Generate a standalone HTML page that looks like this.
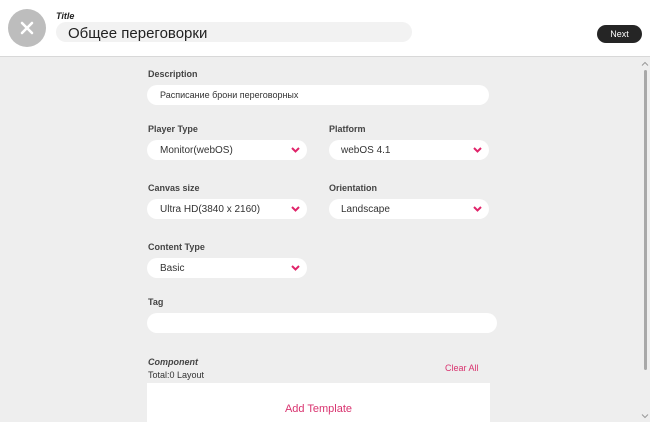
<!DOCTYPE html>
<html><head><meta charset="utf-8"><style>
*{margin:0;padding:0;box-sizing:border-box}
body{width:650px;height:422px;overflow:hidden;background:#eee;font-family:"Liberation Sans",sans-serif;position:relative}
.hdr{position:absolute;left:0;top:0;width:650px;height:57px;background:#fff;border-bottom:1px solid #d8d8d8}
.abs{position:absolute}
.lbl{position:absolute;font-size:9px;font-weight:bold;color:#444}
.inp{position:absolute;background:#fff;border-radius:10px;height:20px;font-size:10px;color:#333;line-height:21px;padding-left:13px}
.sel{width:160px;padding-left:13px;line-height:22px}
.sel svg{position:absolute;right:7px;top:7px}
</style></head><body>
<div class="hdr">
 <div class="abs" style="left:8px;top:9px;width:38px;height:38px;border-radius:50%;background:#bdbdbd"></div>
 <svg class="abs" style="left:19px;top:20px" width="16" height="16" viewBox="0 0 16 16"><path d="M3 3L13 13M13 3L3 13" stroke="#fff" stroke-width="2.6" stroke-linecap="round"/></svg>
 <div class="abs" style="left:56px;top:11px;font-size:9px;font-weight:bold;font-style:italic;color:#222">Title</div>
 <div class="abs" style="left:56px;top:22px;width:356px;height:20px;border-radius:10px;background:#f2f2f2;font-size:15px;line-height:23px;padding-left:12px;color:#222">Общее переговорки</div>
 <div class="abs" style="left:597px;top:25px;width:45px;height:18px;border-radius:9px;background:#252525;color:#fff;font-size:9px;line-height:18px;text-align:center">Next</div>
</div>
<div class="lbl" style="left:148px;top:69px">Description</div>
<div class="inp" style="left:147px;top:85px;width:342px;font-size:9px">Расписание брони переговорных</div>
<div class="lbl" style="left:148px;top:124px">Player Type</div>
<div class="lbl" style="left:329px;top:124px">Platform</div>
<div class="inp sel" style="left:147px;top:140px">Monitor(webOS)<svg width="9" height="6"><path d="M1 1L4.5 4.5L8 1" stroke="#e0246a" stroke-width="2" fill="none"/></svg></div>
<div class="inp sel" style="left:329px;top:140px;padding-left:12px">webOS 4.1<svg width="9" height="6"><path d="M1 1L4.5 4.5L8 1" stroke="#e0246a" stroke-width="2" fill="none"/></svg></div>
<div class="lbl" style="left:148px;top:183px">Canvas size</div>
<div class="lbl" style="left:329px;top:183px">Orientation</div>
<div class="inp sel" style="left:147px;top:199px">Ultra HD(3840 x 2160)<svg width="9" height="6"><path d="M1 1L4.5 4.5L8 1" stroke="#e0246a" stroke-width="2" fill="none"/></svg></div>
<div class="inp sel" style="left:329px;top:199px;padding-left:12px">Landscape<svg width="9" height="6"><path d="M1 1L4.5 4.5L8 1" stroke="#e0246a" stroke-width="2" fill="none"/></svg></div>
<div class="lbl" style="left:148px;top:242px">Content Type</div>
<div class="inp sel" style="left:147px;top:258px">Basic<svg width="9" height="6"><path d="M1 1L4.5 4.5L8 1" stroke="#e0246a" stroke-width="2" fill="none"/></svg></div>
<div class="lbl" style="left:148px;top:297px">Tag</div>
<div class="inp" style="left:147px;top:313px;width:350px"></div>
<div class="lbl" style="left:148px;top:357px;font-style:italic">Component</div>
<div class="lbl" style="left:148px;top:370px;font-weight:normal;color:#333">Total:0 Layout</div>
<div class="abs" style="left:445px;top:363px;font-size:9px;color:#d9336f">Clear All</div>
<div class="abs" style="left:147px;top:383px;width:343px;height:39px;background:#fff;color:#d9336f;font-size:11px;text-align:center;padding-top:20px">Add Template</div>
<svg class="abs" style="left:641px;top:61px" width="8" height="6"><path d="M1 4.5L4 1.5L7 4.5" stroke="#999" fill="none"/></svg>
<div class="abs" style="left:644px;top:70px;width:3px;height:300px;background:#a8a8a8;border-radius:2px"></div>
<svg class="abs" style="left:641px;top:413px" width="8" height="6"><path d="M1 1.5L4 4.5L7 1.5" stroke="#999" fill="none"/></svg>
</body></html>
